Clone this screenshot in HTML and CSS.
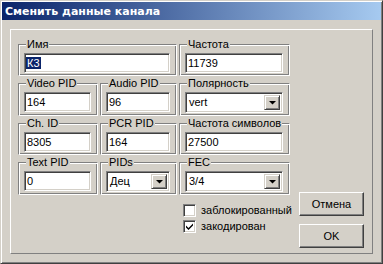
FILE: index.html
```html
<!DOCTYPE html>
<html lang="ru">

<head>
    <meta charset="UTF-8">
    <title>Сменить данные канала</title>
    <link rel="stylesheet" href="styles.css">
</head>

<body>
    <div class="window">
        <div class="titlebar">
            <span class="title">Сменить данные канала</span>
        </div>
        <div class="client">
            <div class="panel">
                <div class="fields">
                    <fieldset class="group wide">
                        <legend>Имя</legend>
                        <div class="edit"><span class="selected">К3</span></div>
                    </fieldset>
                    <fieldset class="group">
                        <legend>Частота</legend>
                        <div class="edit">11739</div>
                    </fieldset>

                    <fieldset class="group">
                        <legend>Video PID</legend>
                        <div class="edit">164</div>
                    </fieldset>
                    <fieldset class="group">
                        <legend>Audio PID</legend>
                        <div class="edit">96</div>
                    </fieldset>
                    <fieldset class="group">
                        <legend>Полярность</legend>
                        <div class="combo">
                            <span class="value">vert</span>
                            <span class="drop"><svg width="7" height="4" viewBox="0 0 7 4"><polygon points="0,0 7,0 3.5,3.5" fill="#000"/></svg></span>
                        </div>
                    </fieldset>

                    <fieldset class="group">
                        <legend>Ch. ID</legend>
                        <div class="edit">8305</div>
                    </fieldset>
                    <fieldset class="group">
                        <legend>PCR PID</legend>
                        <div class="edit">164</div>
                    </fieldset>
                    <fieldset class="group">
                        <legend>Частота символов</legend>
                        <div class="edit">27500</div>
                    </fieldset>

                    <fieldset class="group">
                        <legend>Text PID</legend>
                        <div class="edit">0</div>
                    </fieldset>
                    <fieldset class="group">
                        <legend>PIDs</legend>
                        <div class="combo">
                            <span class="value">Дец</span>
                            <span class="drop"><svg width="7" height="4" viewBox="0 0 7 4"><polygon points="0,0 7,0 3.5,3.5" fill="#000"/></svg></span>
                        </div>
                    </fieldset>
                    <fieldset class="group">
                        <legend>FEC</legend>
                        <div class="combo">
                            <span class="value">3/4</span>
                            <span class="drop"><svg width="7" height="4" viewBox="0 0 7 4"><polygon points="0,0 7,0 3.5,3.5" fill="#000"/></svg></span>
                        </div>
                    </fieldset>

                    <div class="checks">
                        <div class="check">
                            <span class="box"></span>
                            <span class="caption">заблокированный</span>
                        </div>
                        <div class="check">
                            <span class="box"><svg width="7" height="7" viewBox="0 0 7 7"><path d="M0 2.5 L2.5 5 L7 0.5 V2.5 L2.5 7 L0 4.5 Z" fill="#000"/></svg></span>
                            <span class="caption">закодирован</span>
                        </div>
                    </div>
                </div>

                <div class="buttons">
                    <div class="button">Отмена</div>
                    <div class="button">OK</div>
                </div>
            </div>
        </div>
    </div>
</body>

</html>
```

FILE: styles.css
```css
body {
    margin: 0;
    background: #d4d0c8;
    font-family: "Liberation Sans", Arial, sans-serif;
    font-size: 11px;
    color: #000;
}

.window {
    width: 383px;
    height: 264px;
    box-sizing: border-box;
    padding: 1px;
    border: 1px solid;
    border-color: #d4d0c8 #404040 #404040 #d4d0c8;
    box-shadow: inset 1px 1px #fff, inset -1px -1px #808080;
    display: flex;
    flex-direction: column;
}

.titlebar {
    height: 18px;
    margin-bottom: 1px;
    background: linear-gradient(to right, #0a246a, #a6caf0);
    display: flex;
    align-items: center;
    padding-left: 3px;
}

.title {
    color: #fff;
    font-family: "DejaVu Sans", sans-serif;
    font-weight: bold;
    font-size: 11px;
}

.client {
    flex: 1;
    padding: 8px;
    display: flex;
}

.panel {
    flex: 1;
    display: flex;
    gap: 9px;
    padding: 8px 6px 5px 7px;
    border: 1px solid;
    border-color: #fff #808080 #808080 #fff;
}

.fields {
    display: grid;
    grid-template-columns: 80px 77px 111px;
    grid-auto-rows: min-content;
    column-gap: 2px;
    row-gap: 1px;
}

.group {
    margin: 0;
    min-width: 0;
    padding: 2px 6px 2px 5px;
    border: 1px solid;
    border-color: #808080 #fff #fff #808080;
    box-shadow: inset 1px 1px #fff, inset -1px -1px #808080;
}

.group.wide {
    grid-column: span 2;
}

.group legend {
    margin-left: 2px;
    padding: 0 1px;
    line-height: 13px;
    background: #d4d0c8;
}

.edit,
.combo {
    height: 20px;
    box-sizing: border-box;
    background: #fff;
    border: 1px solid;
    border-color: #808080 #fff #fff #808080;
    box-shadow: inset 1px 1px #404040, inset -1px -1px #d4d0c8;
    padding: 2px 2px 0 2px;
    line-height: 15px;
    white-space: nowrap;
    overflow: hidden;
}

.selected {
    background: #0a246a;
    color: #fff;
    padding: 0 1px;
    margin-left: -1px;
}

.combo {
    display: flex;
    justify-content: space-between;
    padding: 2px;
    height: 21px;
}

.combo .value {
    padding-left: 1px;
}

.drop {
    width: 16px;
    height: 15px;
    box-sizing: border-box;
    background: #d4d0c8;
    border: 1px solid;
    border-color: #d4d0c8 #404040 #404040 #d4d0c8;
    box-shadow: inset 1px 1px #fff, inset -1px -1px #808080;
    display: flex;
    align-items: center;
    justify-content: center;
}

.drop svg {
    display: block;
}

.checks {
    grid-column: 3;
    margin: 6px 0 0 4px;
}

.check {
    height: 16px;
    display: flex;
    align-items: center;
    gap: 5px;
    white-space: nowrap;
}

.box {
    flex: none;
    width: 13px;
    height: 13px;
    box-sizing: border-box;
    background: #fff;
    border: 1px solid;
    border-color: #808080 #fff #fff #808080;
    box-shadow: inset 1px 1px #404040, inset -1px -1px #d4d0c8;
    display: flex;
    align-items: center;
    justify-content: center;
}

.box svg {
    display: block;
}

.buttons {
    width: 65px;
    display: flex;
    flex-direction: column;
    justify-content: flex-end;
    gap: 8px;
}

.button {
    height: 24px;
    box-sizing: border-box;
    border: 1px solid;
    border-color: #fff #404040 #404040 #fff;
    box-shadow: inset -1px -1px #808080;
    display: flex;
    align-items: center;
    justify-content: center;
}
```
